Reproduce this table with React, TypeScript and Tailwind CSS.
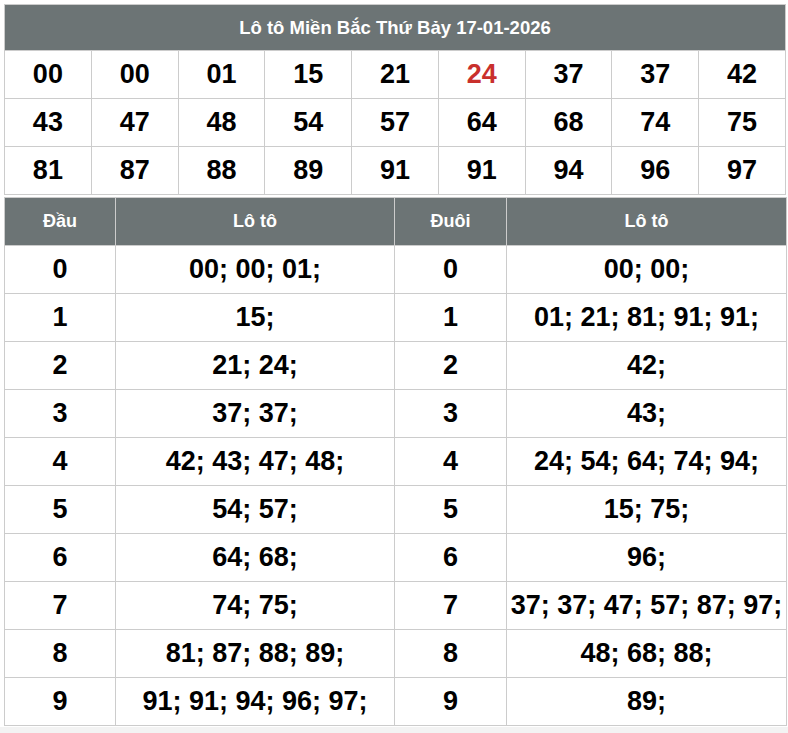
import React from 'react';

const numbers: string[][] = [
  ['00', '00', '01', '15', '21', '24', '37', '37', '42'],
  ['43', '47', '48', '54', '57', '64', '68', '74', '75'],
  ['81', '87', '88', '89', '91', '91', '94', '96', '97'],
];

// Head / tail breakdown rows
const rows: { dau: string; loto: string; duoi: string; loto2: string }[] = [
  { dau: '0', loto: '00; 00; 01;', duoi: '0', loto2: '00; 00;' },
  { dau: '1', loto: '15;', duoi: '1', loto2: '01; 21; 81; 91; 91;' },
  { dau: '2', loto: '21; 24;', duoi: '2', loto2: '42;' },
  { dau: '3', loto: '37; 37;', duoi: '3', loto2: '43;' },
  { dau: '4', loto: '42; 43; 47; 48;', duoi: '4', loto2: '24; 54; 64; 74; 94;' },
  { dau: '5', loto: '54; 57;', duoi: '5', loto2: '15; 75;' },
  { dau: '6', loto: '64; 68;', duoi: '6', loto2: '96;' },
  { dau: '7', loto: '74; 75;', duoi: '7', loto2: '37; 37; 47; 57; 87; 97;' },
  { dau: '8', loto: '81; 87; 88; 89;', duoi: '8', loto2: '48; 68; 88;' },
  { dau: '9', loto: '91; 91; 94; 96; 97;', duoi: '9', loto2: '89;' },
];

const cell = 'border border-[#cccccc] text-center align-middle p-0 h-[48px]';
const head = 'border border-[#cccccc] bg-[#6c7475] text-white text-[18px] font-bold text-center h-[48px] p-0';

export default function App() {
  return (
    <div
      className="min-h-screen flex flex-col bg-white text-black"
      style={{ fontFamily: '"Liberation Sans", Arial, sans-serif' }}
    >
      <div className="pt-[4px] pl-[4px]">
        <table className="w-[782px] border-collapse table-fixed">
          <thead>
            <tr>
              <th
                colSpan={9}
                className="bg-[#6c7475] text-white text-[18.5px] font-bold text-center h-[46px] p-0 border border-[#cccccc]"
              >
                Lô tô Miền Bắc Thứ Bảy 17-01-2026
              </th>
            </tr>
          </thead>
          <tbody>
            {numbers.map((row, rIdx) => (
              <tr key={rIdx}>
                {row.map((n, cIdx) => (
                  <td
                    key={cIdx}
                    className={`${cell} text-[27px] font-bold ${rIdx === 0 && cIdx === 5 ? 'text-[#c9302c]' : 'text-black'}`}
                  >
                    {n}
                  </td>
                ))}
              </tr>
            ))}
          </tbody>
        </table>

        <table className="w-[782px] border-collapse table-fixed mt-[2px]">
          <colgroup>
            <col className="w-[111px]" />
            <col className="w-[279px]" />
            <col className="w-[112px]" />
            <col className="w-[280px]" />
          </colgroup>
          <thead>
            <tr>
              <th className={head}>Đầu</th>
              <th className={head}>Lô tô</th>
              <th className={head}>Đuôi</th>
              <th className={head}>Lô tô</th>
            </tr>
          </thead>
          <tbody>
            {rows.map((r) => (
              <tr key={r.dau}>
                <td className={`${cell} text-[27px] font-bold`}>{r.dau}</td>
                <td className={`${cell} text-[27px] font-bold whitespace-nowrap`}>{r.loto}</td>
                <td className={`${cell} text-[27px] font-bold`}>{r.duoi}</td>
                <td className={`${cell} text-[27px] font-bold whitespace-nowrap`}>{r.loto2}</td>
              </tr>
            ))}
          </tbody>
        </table>
      </div>
      <div className="flex-1 bg-[#f3f3f3] mt-[1px]" />
    </div>
  );
}
